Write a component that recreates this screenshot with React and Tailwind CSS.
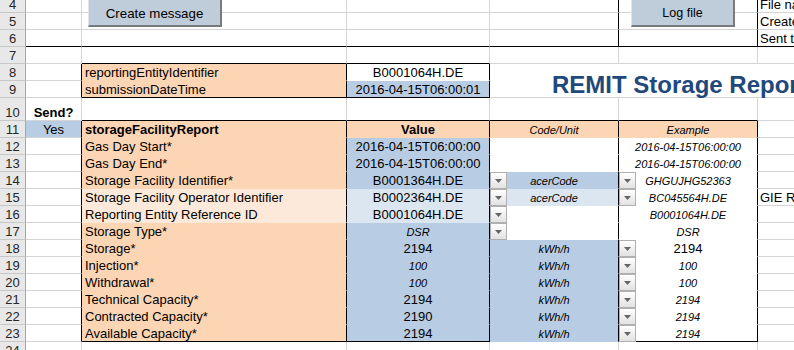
import React from "react";

const RB = {
  g: "border-r border-r-[#d4d4d4]",
  k: "border-r border-r-black",
  n: "border-r border-r-transparent",
  x: "",
};
const BB = {
  g: "border-b border-b-[#d4d4d4]",
  k: "border-b border-b-black",
  n: "border-b border-b-transparent",
};
const AL = {
  l: "pl-[3px]",
  c: "justify-center",
  f: "pl-[2px]",
};

const P = "bg-[#fcd5b4]";
const LP = "bg-[#fde9d9]";
const BL = "bg-[#b8cce4]";
const LB = "bg-[#dce6f1]";
const W = "bg-white";
const SM = "italic text-[11px]";

function Cell({ r = "g", b = "g", bg = "", align = "l", tall = false, className = "", children }) {
  return (
    <div
      className={`relative flex items-end whitespace-nowrap leading-[14px] ${tall ? "h-[23px]" : "h-[17px]"} ${RB[r]} ${BB[b]} ${bg} ${AL[align]} ${className}`}
    >
      {children}
    </div>
  );
}

function Hdr({ n, tall = false }) {
  return (
    <div
      className={`flex items-end justify-center leading-[14px] bg-[#e8e8e8] border-r border-r-[#a6a6a6] border-b border-b-[#c8c8c8] text-[#262626] ${tall ? "h-[23px]" : "h-[17px]"}`}
    >
      {n}
    </div>
  );
}

function Dd({ pos }) {
  return (
    <div
      className={`absolute top-0 z-10 w-[17px] h-[17px] border border-[#b0b0b0] bg-linear-to-b from-white to-[#e2e2e2] flex items-center justify-center ${pos}`}
    >
      <svg width="7" height="4" viewBox="0 0 7 4">
        <path d="M0 0H7L3.5 4Z" fill="#666666" />
      </svg>
    </div>
  );
}

const data = [
  { n: 12, b: "Gas Day Start*", bBg: P, c: "2016-04-15T06:00:00", cBg: BL, d: "", dBg: W, e: "2016-04-15T06:00:00", eI: true },
  { n: 13, b: "Gas Day End*", bBg: P, c: "2016-04-15T06:00:00", cBg: BL, d: "", dBg: W, e: "2016-04-15T06:00:00", eI: true },
  { n: 14, b: "Storage Facility Identifier*", bBg: P, c: "B0001364H.DE", cBg: BL, cDd: true, d: "acerCode", dBg: BL, dDd: true, e: "GHGUJHG52363", eI: true },
  { n: 15, b: "Storage Facility Operator Identifier", bBg: LP, c: "B0002364H.DE", cBg: LB, cDd: true, d: "acerCode", dBg: LB, dDd: true, e: "BC045564H.DE", eI: true, f: "GIE REMIT" },
  { n: 16, b: "Reporting Entity Reference ID", bBg: LP, c: "B0001064H.DE", cBg: LB, cDd: true, d: "", dBg: W, e: "B0001064H.DE", eI: true },
  { n: 17, b: "Storage Type*", bBg: P, c: "DSR", cI: true, cBg: BL, cDd: true, d: "", dBg: W, e: "DSR", eI: true },
  { n: 18, b: "Storage*", bBg: P, c: "2194", cBg: BL, d: "kWh/h", dBg: BL, dDd: true, e: "2194", eI: false },
  { n: 19, b: "Injection*", bBg: P, c: "100", cI: true, cBg: BL, d: "kWh/h", dBg: BL, dDd: true, e: "100", eI: true },
  { n: 20, b: "Withdrawal*", bBg: P, c: "100", cI: true, cBg: BL, d: "kWh/h", dBg: BL, dDd: true, e: "100", eI: true },
  { n: 21, b: "Technical Capacity*", bBg: P, c: "2194", cBg: BL, d: "kWh/h", dBg: BL, dDd: true, e: "2194", eI: true },
  { n: 22, b: "Contracted Capacity*", bBg: P, c: "2190", cBg: BL, d: "kWh/h", dBg: BL, dDd: true, e: "2194", eI: true },
  { n: 23, b: "Available Capacity*", bBg: P, c: "2194", cBg: BL, d: "kWh/h", dBg: BL, dDd: true, e: "2194", eI: true, last: true },
];

function Btn({ className, textCls, children }) {
  return (
    <div
      className={`absolute top-0 h-[27px] flex items-center justify-center pt-[2px] leading-[15px] bg-[#bfccda] border-l border-l-[#dde4ec] border-r-2 border-r-[#7a7a7a] border-b-2 border-b-[#7a7a7a] text-black z-20 ${className} ${textCls}`}
    >
      {children}
    </div>
  );
}

export default function App() {
  return (
    <div className="relative w-[794px] h-[350px] overflow-hidden bg-white font-['Liberation_Sans',Arial,sans-serif] text-[13px] text-black">
      <div className="grid grid-cols-[26px_56px_265px_143px_129px_139px_36px] -mt-[4px]">
        {/* Row 4 */}
        <Hdr n={4} />
        <Cell />
        <Cell />
        <Cell />
        <Cell r="k" />
        <Cell r="k" />
        <Cell r="x" align="f">File name</Cell>
        {/* Row 5 */}
        <Hdr n={5} />
        <Cell />
        <Cell />
        <Cell />
        <Cell r="k" />
        <Cell r="k" />
        <Cell r="x" align="f">Created on</Cell>
        {/* Row 6 */}
        <Hdr n={6} />
        <Cell b="k" />
        <Cell b="k" />
        <Cell b="k" />
        <Cell r="k" b="k" />
        <Cell r="k" b="k" />
        <Cell r="x" b="k" align="f">Sent to</Cell>
        {/* Row 7 */}
        <Hdr n={7} />
        <Cell />
        <Cell b="k" />
        <Cell b="k" />
        <Cell />
        <Cell />
        <Cell r="x" />
        {/* Row 8 */}
        <Hdr n={8} />
        <Cell r="k" />
        <Cell r="k" b="n" bg={P}>reportingEntityIdentifier</Cell>
        <Cell r="k" b="n" bg={W} align="c">B0001064H.DE</Cell>
        <div className="col-span-3 row-span-2 flex items-end whitespace-nowrap pl-[62px] border-b border-b-[#d4d4d4] text-[24px] leading-[24px] font-bold text-[#1f497d]">
          REMIT Storage Report
        </div>
        {/* Row 9 */}
        <Hdr n={9} />
        <Cell r="k" />
        <Cell r="k" b="k" bg={P}>submissionDateTime</Cell>
        <Cell r="k" b="k" bg={BL} align="c">2016-04-15T06:00:01</Cell>
        {/* Row 10 */}
        <Hdr n={10} tall />
        <Cell tall align="c" className="font-bold">Send?</Cell>
        <Cell tall b="k" />
        <Cell tall b="k" />
        <Cell tall b="k" />
        <Cell tall b="k" />
        <Cell tall r="x" />
        {/* Row 11 */}
        <Hdr n={11} />
        <Cell r="k" bg={BL} align="c">Yes</Cell>
        <Cell r="k" b="n" bg={P} className="font-bold">storageFacilityReport</Cell>
        <Cell r="k" b="n" bg={P} align="c" className="font-bold">Value</Cell>
        <Cell r="k" b="n" bg={P} align="c" className={SM}>Code/Unit</Cell>
        <Cell r="k" b="n" bg={P} align="c" className={SM}>Example</Cell>
        <Cell r="x" />
        {/* Rows 12-23 */}
        {data.map((d) => (
          <React.Fragment key={d.n}>
            <Hdr n={d.n} />
            <Cell r="k" />
            <Cell r="k" b={d.last ? "k" : "n"} bg={d.bBg}>{d.b}</Cell>
            <Cell r="k" b={d.last ? "k" : "n"} bg={d.cBg} align="c" className={d.cI ? SM : ""}>
              {d.c}
              {d.cDd && <Dd pos="left-[143px]" />}
            </Cell>
            <Cell r="k" b="n" bg={d.dBg} align="c" className={SM}>
              {d.d}
              {d.dDd && <Dd pos="left-[129px]" />}
            </Cell>
            <Cell r="k" b={d.last ? "k" : "n"} bg={W} align="c" className={d.eI ? SM : ""}>
              {d.e}
            </Cell>
            <Cell r="x" align="f">{d.f || ""}</Cell>
          </React.Fragment>
        ))}
        {/* Row 24 */}
        <Hdr n={24} />
        <Cell />
        <Cell />
        <Cell />
        <Cell />
        <Cell />
        <Cell r="x" />
      </div>

      <Btn className="left-[88px] w-[134px]" textCls="text-[13.3px]">Create message</Btn>
      <Btn className="left-[631px] w-[104px]" textCls="text-[12.5px]">Log file</Btn>
    </div>
  );
}
